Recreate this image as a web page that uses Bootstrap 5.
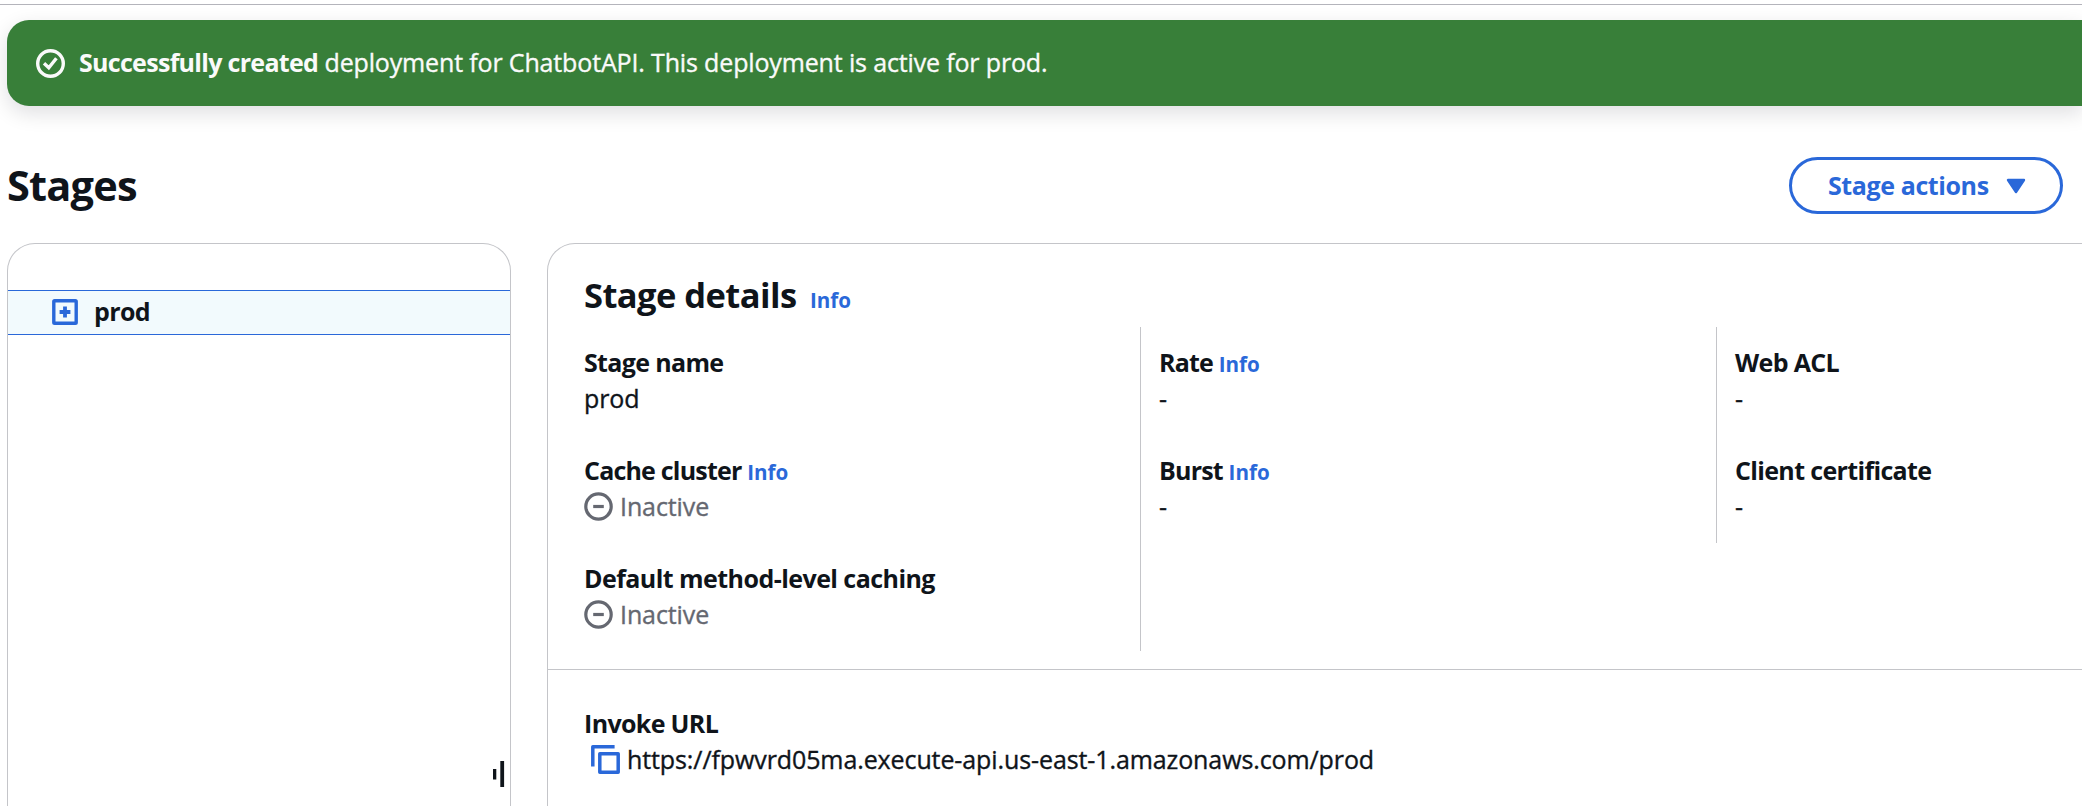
<!DOCTYPE html>
<html lang="en">
<head>
<meta charset="utf-8">
<meta name="viewport" content="width=device-width, initial-scale=1">
<title>Stages</title>
<link rel="stylesheet" href="https://cdn.jsdelivr.net/npm/bootstrap@5.3.0/dist/css/bootstrap.min.css">
<style>
  :root { --ink: #0f141a; --accent: #2a68d9; --line: #c4c5c9; --muted-ink: #656871; }
  body { font-family: "Open Sans", sans-serif; font-size: 25px; line-height: 36px; color: var(--ink); background: #fff; height: 806px; overflow: hidden; letter-spacing: -.1px; -webkit-text-stroke: .35px; }
  svg { display: block; flex: none; }
  strong, h1, h2, .btn-stage, .tree-row, .attr-label { -webkit-text-stroke: 0; }
  .topline { height: 5px; border-bottom: 1px solid #b4b4bb; }
  .flash { margin: 15px 0 0 7px; height: 86px; padding: 24px 29px 0; background: #387f39; color: #fafafa; border-radius: 22px 0 0 22px; box-shadow: 0 7px 20px 1px rgba(0,7,22,.12); letter-spacing: -.15px; }
  .flash strong { font-weight: 700; letter-spacing: -.7px; }
  .flash svg { margin: 5px 14px 0 0; }
  .page-head { margin: 51px 19px 0 7px; height: 57px; }
  h1 { font-size: 41.5px; line-height: 54px; font-weight: 700; letter-spacing: -.8px; margin: 1px 0 0; }
  .btn-stage { width: 274px; height: 57px; border: 3px solid var(--accent); border-radius: 29px; color: var(--accent); font-size: 25px; line-height: 36px; font-weight: 700; letter-spacing: -.4px; padding: 7px 0 0 36px; }
  .btn-stage svg { margin: 11px 0 0 17.5px; }
  .panels { margin: 29px 0 0 7px; height: 563px; }
  .tree { width: 504px; border: 1px solid var(--line); border-bottom: 0; border-radius: 28px 28px 0 0; flex: none; padding-top: 46px; }
  .tree-row { height: 45px; background: #f2fafd; border: solid var(--accent); border-width: 1px 0; padding: 2px 0 0 44px; font-weight: 700; letter-spacing: -.6px; }
  .tree-row svg { margin: 6px 16px 0 0; }
  .handle { position: absolute; right: 5.5px; bottom: 19px; }
  .details { min-width: 0; margin-left: 36px; border: 1px solid var(--line); border-width: 1px 0 0 1px; border-radius: 28px 0 0 0; }
  .details h2 { font-size: 34.5px; line-height: 44px; font-weight: 700; letter-spacing: -.57px; margin: 0; }
  .details-head { padding: 29px 0 0 36px; height: 83px; gap: 13.5px; }
  .info { font-size: 20.6px; line-height: 1; font-weight: 700; color: var(--accent); text-decoration: none; letter-spacing: 0; -webkit-text-stroke: 0; }
  .attrs { padding-left: 16px; height: 343px; border-bottom: 1px solid var(--line); }
  .attrs-col { width: 576px; flex: none; padding-left: 20px; }
  .attrs-col + .attrs-col { border-left: 1px solid var(--line); padding-left: 18px; }
  .attrs-col:last-child { width: auto; flex: 1 1 0; }
  .attr { height: 108px; padding-top: 17px; }
  .attr-label { font-weight: 700; letter-spacing: -.65px; white-space: nowrap; }
  .tight { letter-spacing: -.8px; }
  .loose { letter-spacing: -.55px; }
  .inactive { color: var(--muted-ink); }
  .inactive svg { margin: 4px 7px 0 0; }
  .invoke { padding: 35px 0 0 36px; }
  .invoke svg { margin: 4px 7px 0; }
</style>
</head>
<body>
<div class="topline"></div>

<div class="flash d-flex align-items-start">
  <svg width="29" height="29" viewBox="0 0 29 29" fill="none" stroke="#fafafa" stroke-width="3.4"><circle cx="14.5" cy="14.5" r="12.8"/><path d="M8 14.2l4.8 4.6 7.6-9.6"/></svg>
  <div><strong>Successfully created</strong> deployment for ChatbotAPI. This deployment is active for prod.</div>
</div>

<div class="page-head d-flex justify-content-between align-items-start">
  <h1>Stages</h1>
  <button type="button" class="btn btn-stage d-flex align-items-start">Stage actions
    <svg width="20" height="16" viewBox="0 0 20 16"><path d="M2 2h16L10 14z" fill="#2a68d9" stroke="#2a68d9" stroke-width="2.4" stroke-linejoin="round"/></svg>
  </button>
</div>

<div class="panels d-flex">
  <aside class="tree position-relative">
    <div class="tree-row d-flex align-items-start">
      <svg width="26" height="26" viewBox="0 0 26 26" fill="none" stroke="#2a68d9"><rect x="1.8" y="1.8" width="22.4" height="22.4" rx=".8" stroke-width="3.4"/><path d="M13 7.6v10.8M7.6 13h10.8" stroke-width="3.8"/></svg>
      <span>prod</span>
    </div>
    <svg class="handle" width="13" height="26" viewBox="0 0 13 26" fill="#0f141a"><rect x="1" y="8" width="3.3" height="10.5"/><rect x="8.3" width="3.8" height="26"/></svg>
  </aside>

  <main class="details flex-grow-1">
    <div class="details-head d-flex align-items-baseline">
      <h2>Stage details</h2>
      <a class="info" href="#">Info</a>
    </div>
    <div class="attrs d-flex align-items-start">
      <div class="attrs-col">
        <div class="attr"><div class="attr-label">Stage name</div><div>prod</div></div>
        <div class="attr">
          <div class="attr-label tight">Cache cluster <a class="info" href="#">Info</a></div>
          <div class="inactive d-flex"><svg width="29" height="29" viewBox="0 0 29 29" fill="none" stroke="#656871" stroke-width="3.2"><circle cx="14.5" cy="14.5" r="12.7"/><path d="M9.2 14.5h10.6"/></svg>Inactive</div>
        </div>
        <div class="attr">
          <div class="attr-label loose">Default method-level caching</div>
          <div class="inactive d-flex"><svg width="29" height="29" viewBox="0 0 29 29" fill="none" stroke="#656871" stroke-width="3.2"><circle cx="14.5" cy="14.5" r="12.7"/><path d="M9.2 14.5h10.6"/></svg>Inactive</div>
        </div>
      </div>
      <div class="attrs-col">
        <div class="attr"><div class="attr-label tight">Rate <a class="info" href="#">Info</a></div><div>-</div></div>
        <div class="attr"><div class="attr-label tight">Burst <a class="info" href="#">Info</a></div><div>-</div></div>
        <div class="attr"></div>
      </div>
      <div class="attrs-col">
        <div class="attr"><div class="attr-label">Web ACL</div><div>-</div></div>
        <div class="attr"><div class="attr-label">Client certificate</div><div>-</div></div>
      </div>
    </div>
    <div class="invoke">
      <div class="attr-label">Invoke URL</div>
      <div class="d-flex"><svg width="29" height="29" viewBox="0 0 29 29" fill="none" stroke="#2a68d9" stroke-width="3.5" stroke-linejoin="round"><path d="M1.8 21.6V1.8H23.6"/><rect x="8.8" y="8.8" width="18.4" height="18.4"/></svg>https://fpwvrd05ma.execute-api.us-east-1.amazonaws.com/prod</div>
    </div>
  </main>
</div>
<script src="https://cdn.jsdelivr.net/npm/bootstrap@5.3.0/dist/js/bootstrap.bundle.min.js"></script>
</body>
</html>
